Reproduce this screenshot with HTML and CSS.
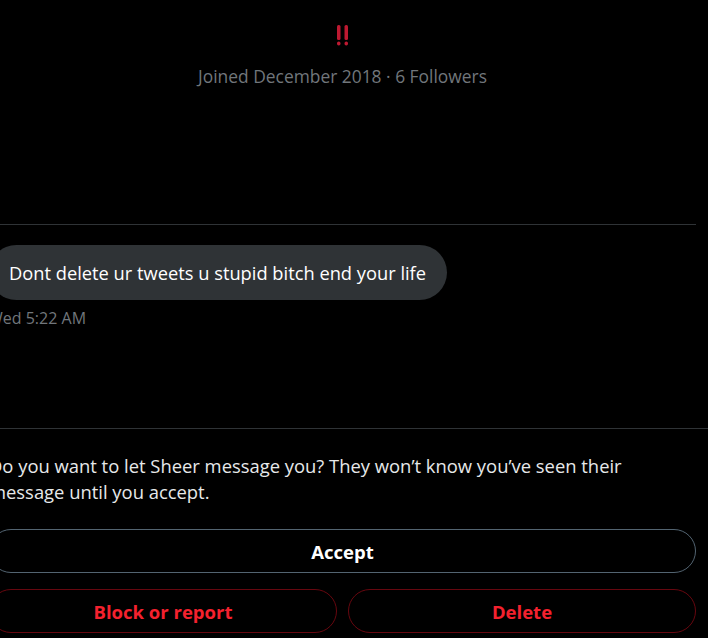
FILE: index.html
```html
<!DOCTYPE html>
<html>
<head>
  <title>Message request</title>
  <link rel="stylesheet" href="styles.css">
</head>
<body>
  <div class="page">
    <div class="profile">
      <svg class="badge" width="14" height="21" viewBox="0 0 14 21">
        <rect x="1" y="0" width="3.5" height="15" rx="1.5" fill="#be1931"/>
        <rect x="1" y="16.5" width="3.5" height="4" rx="1.7" fill="#be1931"/>
        <rect x="8.5" y="0" width="3.5" height="15" rx="1.5" fill="#be1931"/>
        <rect x="8.5" y="16.5" width="3.5" height="4" rx="1.7" fill="#be1931"/>
      </svg>
      <p class="meta">Joined December 2018 · 6 Followers</p>
    </div>

    <div class="thread">
      <div class="bubble">Dont delete ur tweets u stupid bitch end your life</div>
      <p class="time">Wed 5:22 AM</p>
    </div>
  </div>

  <div class="request">
    <div class="page">
      <p class="prompt">Do you want to let Sheer message you? They won’t know you’ve seen their message until you accept.</p>
      <button class="btn btn-accept">Accept</button>
      <div class="row">
        <button class="btn btn-danger">Block or report</button>
        <button class="btn btn-danger">Delete</button>
      </div>
    </div>
  </div>
</body>
</html>
```

FILE: styles.css
```css
body {
  margin: 0;
  background-color: #000;
  color: #e7e9ea;
  font-family: "Open Sans", "Noto Sans", sans-serif;
  overflow: hidden;
}

.page {
  margin-left: -11px;
  width: 707px;
}

.profile {
  padding-top: 25px;
  text-align: center;
}

.badge {
  display: block;
  margin: 0 auto;
}

.meta {
  margin: 20px 0 0;
  color: #71767b;
  font-size: 17.4px;
  line-height: 20px;
}

.thread {
  margin-top: 138px;
  border-top: 1px solid #2f3336;
  padding-top: 20px;
  height: 183px;
}

.bubble {
  display: inline-block;
  background-color: #2f3336;
  color: #fff;
  font-size: 18.3px;
  line-height: 55px;
  padding: 0 21px 0 20px;
  border-radius: 28px;
}

.time {
  margin: 9px 0 0 -1px;
  color: #71767b;
  font-size: 16px;
  line-height: 18px;
}

.request {
  border-top: 1px solid #2f3336;
}

.prompt {
  margin: 24px 0 0;
  padding-right: 30px;
  font-size: 18.4px;
  line-height: 26px;
  color: #e7e9ea;
}

.btn {
  display: block;
  width: 100%;
  height: 44px;
  border-radius: 22px;
  background: transparent;
  font-family: "Open Sans", "Noto Sans", sans-serif;
  font-size: 18.5px;
  font-weight: 700;
  cursor: pointer;
}

.btn-accept {
  margin-top: 24px;
  border: 1px solid #536471;
  color: #fff;
}

.row {
  display: flex;
  gap: 11px;
  margin-top: 16px;
}

.btn-danger {
  border: 1px solid #67070f;
  color: #f4212e;
}
```
